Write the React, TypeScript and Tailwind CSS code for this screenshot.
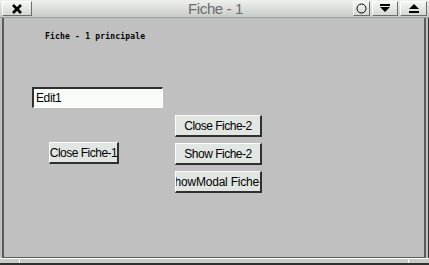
import React from 'react';

const sans = { fontFamily: '"Liberation Sans", Arial, sans-serif' };

const TitleButton = ({ className, children }: { className: string; children?: React.ReactNode }) => (
  <div
    className={`h-[15px] flex items-center justify-center border border-t-white border-l-white border-r-[#6a6e6a] border-b-[#6a6e6a] bg-gradient-to-b from-[#f4f6f4] to-[#d4d8d4] ${className}`}
  >
    {children}
  </div>
);

const FormButton = ({ className, label }: { className: string; label: string }) => (
  <div
    className={`h-[22px] flex items-center justify-center overflow-hidden whitespace-nowrap bg-[#e2e6e2] border-t border-l border-white border-r-2 border-b-2 border-r-[#303030] border-b-[#303030] text-[12px] text-black ${className}`}
    style={sans}
  >
    {label}
  </div>
);

export default function App() {
  return (
    <div className="w-[429px] h-[265px] flex flex-col bg-[#c0c0c0] overflow-hidden">
      {/* title bar */}
      <div className="h-[18px] shrink-0 flex items-center gap-[2px] px-[2px] bg-gradient-to-b from-[#eef0ee] to-[#c8ccc8] border-b border-[#9a9e9a]">
        <TitleButton className="w-[30px]">
          <svg width="10" height="10" viewBox="0 0 10 10">
            <path d="M1 1 L9 9 M9 1 L1 9" stroke="#000" strokeWidth="2.6" />
          </svg>
        </TitleButton>
        <div
          className="flex-1 pl-[46px] flex items-center justify-center text-[15px] leading-[17px] text-[#6c6c6c] tracking-[-0.4px]"
          style={sans}
        >
          Fiche - 1
        </div>
        <TitleButton className="w-[17px]">
          <svg width="11" height="11" viewBox="0 0 11 11">
            <circle cx="5.5" cy="5.5" r="4.5" fill="none" stroke="#000" strokeWidth="1" />
          </svg>
        </TitleButton>
        <TitleButton className="w-[26px]">
          <svg width="10" height="9" viewBox="0 0 10 9">
            <rect x="0" y="0" width="10" height="2" fill="#000" />
            <path d="M0 3 H10 L5 8 Z" fill="#000" />
          </svg>
        </TitleButton>
        <TitleButton className="w-[27px]">
          <svg width="10" height="9" viewBox="0 0 10 9">
            <path d="M0 5 L5 0 L10 5 Z" fill="#000" />
            <rect x="0" y="7" width="10" height="2" fill="#000" />
          </svg>
        </TitleButton>
      </div>

      {/* window body */}
      <div className="flex-1 flex px-[2px] border-r border-[#303030]">
        <div className="flex-1 flex border-l-2 border-r-2 border-b border-[#5a5e5a]">
          {/* left column */}
          <div className="flex flex-col items-start pl-[28px] pt-[14px]">
            <div
              className="ml-[13px] text-[8px] leading-[10px] font-bold text-black tracking-[0.2px]"
              style={{ fontFamily: '"DejaVu Sans Mono", monospace' }}
            >
              Fiche - 1 principale
            </div>
            <div
              className="mt-[45px] w-[131px] h-[21px] bg-[#f8fcf8] border-t-2 border-l-2 border-[#303030] border-r border-b border-r-white border-b-white flex items-center pl-[2px] text-[12px] text-black tracking-[-0.4px]"
              style={sans}
            >
              Edit1
            </div>
            <FormButton className="ml-[17px] mt-[34px] w-[70px] tracking-[-0.5px]" label="Close Fiche-1" />
          </div>
          {/* right column */}
          <div className="flex flex-col gap-[6px] pl-[12px] pt-[97px]">
            <FormButton className="w-[87px] tracking-[-0.5px]" label="Close Fiche-2" />
            <FormButton className="w-[87px] tracking-[-0.5px]" label="Show Fiche-2" />
            <FormButton className="w-[87px] tracking-[-0.2px]" label="ShowModal Fiche-2" />
          </div>
        </div>
      </div>

      {/* bottom frame */}
      <div className="h-[7px] shrink-0 flex flex-col">
        <div className="h-[5px] flex bg-[#c8ccc8] border-t border-white">
          <div className="w-[20px] border-r border-white" />
          <div className="flex-1" />
          <div className="w-[21px] border-l border-white" />
        </div>
        <div className="h-[2px] bg-[#303030]" />
      </div>
    </div>
  );
}
